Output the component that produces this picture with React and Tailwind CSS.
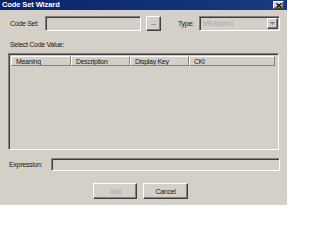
import React from "react";

const sunken =
  "border border-t-[#808080] border-l-[#808080] border-r-white border-b-white shadow-[inset_1px_1px_0_#404040,inset_-1px_-1px_0_#d4d0c8]";
const raised =
  "border border-t-white border-l-white border-r-[#404040] border-b-[#404040] shadow-[inset_-1px_-1px_0_#808080,inset_1px_1px_0_#d4d0c8]";

function HeaderCell({ children, w }) {
  return (
    <div
      className={`${w} h-full flex items-center pl-[4px] border border-t-white border-l-white border-r-[#808080] border-b-[#808080] overflow-hidden whitespace-nowrap`}
    >
      {children}
    </div>
  );
}

export default function App() {
  return (
    <div
      className="w-[287px] h-[205px] bg-[#d4d0c8] flex flex-col text-[7px] tracking-[-0.3px] leading-none text-[#1a1a1a] overflow-hidden whitespace-nowrap"
      style={{ fontFamily: '"Liberation Sans", Arial, sans-serif' }}
    >
      {/* Title bar */}
      <div className="h-[10px] shrink-0 bg-gradient-to-r from-[#0a246a] to-[#1a3a7c] flex items-center justify-between pl-[2px] pr-[3px]">
        <span className="text-white font-bold text-[7.5px] tracking-[-0.1px]">Code Set Wizard</span>
        <div className={`w-[11px] h-[8px] bg-[#d4d0c8] ${raised} flex items-center justify-center`}>
          <svg width="6" height="5" viewBox="0 0 6 5">
            <path d="M0.5 0.5 L5.5 4.5 M5.5 0.5 L0.5 4.5" stroke="black" strokeWidth="1.3" />
          </svg>
        </div>
      </div>

      <div className="flex flex-col pl-[8px] pr-[7px]">
        {/* Row 1 */}
        <div className="flex items-center mt-[6px] h-[15px]">
          <span className="w-[37px] pl-[2px]">Code Set:</span>
          <div className={`w-[96px] h-[15px] bg-[#d4d0c8] ${sunken}`} />
          <div className={`ml-[5px] w-[15px] h-[15px] ${raised} flex items-end justify-center pb-[4px]`}>
            <span className="text-[7px] leading-none">...</span>
          </div>
          <span className="ml-[17px] w-[20px]">Type:</span>
          <div className={`ml-[1px] flex-1 h-[15px] bg-[#d4d0c8] ${sunken} flex items-center justify-between pl-[3px] pr-[1px]`}>
            <span className="text-[#a8a8a8]">MEANING</span>
            <div className={`w-[11px] h-[11px] ${raised} flex items-center justify-center`}>
              <svg width="5" height="3" viewBox="0 0 5 3">
                <path d="M0 0 H5 L2.5 3 Z" fill="#808080" />
              </svg>
            </div>
          </div>
        </div>

        {/* Select Code Value */}
        <div className="mt-[10px] pl-[2px]">Select Code Value:</div>

        {/* List box */}
        <div className={`mt-[5px] h-[97px] mr-[1px] bg-[#d4d0c8] ${sunken} p-[2px]`}>
          <div className="flex h-[10px]">
            <HeaderCell w="w-[60px]">Meaning</HeaderCell>
            <HeaderCell w="w-[59px]">Description</HeaderCell>
            <HeaderCell w="w-[59px]">Display Key</HeaderCell>
            <HeaderCell w="w-[86px]">CKI</HeaderCell>
          </div>
        </div>

        {/* Expression */}
        <div className="flex items-center mt-[8px] h-[13px]">
          <span className="w-[43px] pl-[1px]">Expression:</span>
          <div className={`flex-1 h-[13px] bg-[#d4d0c8] ${sunken}`} />
        </div>

        {/* Buttons */}
        <div className="flex justify-center gap-[6px] mt-[12px] pr-[7px]">
          <div className={`w-[44px] h-[16px] ${raised} flex items-center justify-center text-[#a8a8a8]`}>
            Add
          </div>
          <div className={`w-[45px] h-[16px] ${raised} flex items-center justify-center`}>
            Cancel
          </div>
        </div>
      </div>
    </div>
  );
}
